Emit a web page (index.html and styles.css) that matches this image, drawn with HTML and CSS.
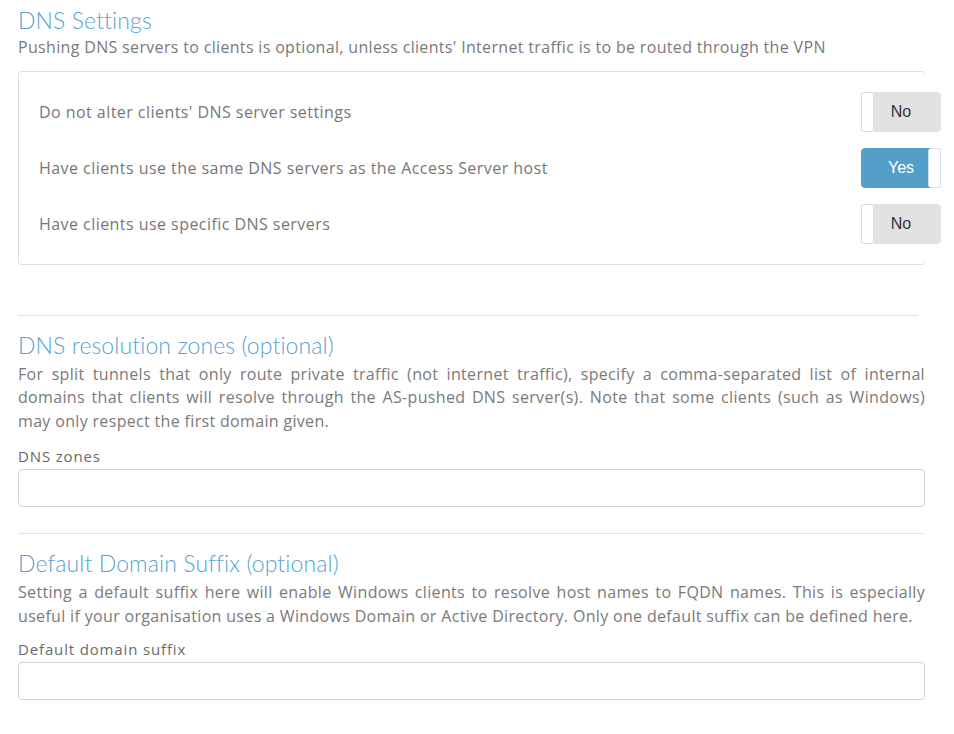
FILE: index.html
```html
<!DOCTYPE html>
<html>
<head>
<meta charset="utf-8">
<link rel="stylesheet" href="styles.css">
</head>
<body>
<div class="page">
  <h2 class="title first">DNS Settings</h2>
  <p class="desc">Pushing DNS servers to clients is optional, unless clients' Internet traffic is to be routed through the VPN</p>
  <div class="panel">
    <div class="row">
      <span class="row-label">Do not alter clients' DNS server settings</span>
      <div class="toggle off"><span class="knob"></span><span class="tlabel">No</span></div>
    </div>
    <div class="row">
      <span class="row-label">Have clients use the same DNS servers as the Access Server host</span>
      <div class="toggle on"><span class="tlabel">Yes</span><span class="knob"></span></div>
    </div>
    <div class="row">
      <span class="row-label">Have clients use specific DNS servers</span>
      <div class="toggle off"><span class="knob"></span><span class="tlabel">No</span></div>
    </div>
  </div>

  <hr class="sep short">
  <h2 class="title">DNS resolution zones (optional)</h2>
  <p class="desc justify">For split tunnels that only route private traffic (not internet traffic), specify a comma-separated list of internal domains that clients will resolve through the AS-pushed DNS server(s). Note that some clients (such as Windows) may only respect the first domain given.</p>
  <label class="field-label">DNS zones</label>
  <input class="field" type="text">

  <hr class="sep">
  <h2 class="title">Default Domain Suffix (optional)</h2>
  <p class="desc justify">Setting a default suffix here will enable Windows clients to resolve host names to FQDN names. This is especially useful if your organisation uses a Windows Domain or Active Directory. Only one default suffix can be defined here.</p>
  <label class="field-label second">Default domain suffix</label>
  <input class="field" type="text">
</div>
</body>
</html>
```

FILE: styles.css
```css
* { box-sizing: border-box; }
html, body { margin: 0; padding: 0; background: #fff; }
body { font-family: "Open Sans", "Noto Sans", sans-serif; color: #7a7a7a; }
.page { width: 907px; margin-left: 18px; display: flex; flex-direction: column; }
.title {
  font-family: "Lato", "Open Sans", sans-serif;
  font-weight: 300;
  font-size: 23px;
  line-height: 26px;
  color: #58a2d3;
  margin: 16px 0 0 0;
  letter-spacing: 0.1px;
}
.title.first { margin-top: 7px; }
.desc {
  font-size: 16px;
  line-height: 23.5px;
  margin: 3px 0 0 0;
  letter-spacing: 0.33px;
}
.desc.justify { text-align: justify; margin-top: 5px; }
.panel {
  margin-top: 11px;
  border: 1px solid #dcdcdc;
  border-right: none;
  border-radius: 4px;
  padding: 20px 0 20px 20px;
  display: flex;
  flex-direction: column;
  gap: 16px;
}
.row { display: flex; align-items: center; justify-content: space-between; height: 40px; }
.row-label { font-size: 16px; letter-spacing: 0.45px; color: #777; }
.toggle {
  position: relative;
  width: 80px; height: 40px;
  margin-right: -16px;
  border-radius: 4px;
  display: flex; align-items: stretch;
  font-family: "Liberation Sans", Arial, sans-serif;
  font-size: 16px;
}
.toggle.off { background: #e2e2e2; border: 1px solid #e2e2e2; color: #333; }
.toggle.on { background: #539fca; border: 1px solid #539fca; color: #fff; }
.knob {
  position: absolute;
  top: -1px; bottom: -1px;
  width: 13px;
  background: #fff;
  border: 1px solid #ddd;
  border-radius: 3px;
}
.toggle.off .knob { left: -1px; }
.toggle.on .knob { right: -1px; border-color: #cfe2ef; }
.tlabel { flex: 1; display: flex; align-items: center; justify-content: center; }
.sep { border: 0; border-top: 1px solid #e3e3e3; margin: 50px 0 0 0; height: 0; }
.sep.short { width: 900px; }
.page > .sep:not(.short) { margin-top: 26px; }
.field-label { font-size: 15px; line-height: 20px; color: #6a6a6a; margin-top: 13px; letter-spacing: 0.85px; }
.field-label.second { margin-top: 11px; }
.field {
  margin-top: 3px;
  height: 38px;
  width: 100%;
  border: 1px solid #cfd3d8;
  border-radius: 4px;
  background: #fff;
}
```
